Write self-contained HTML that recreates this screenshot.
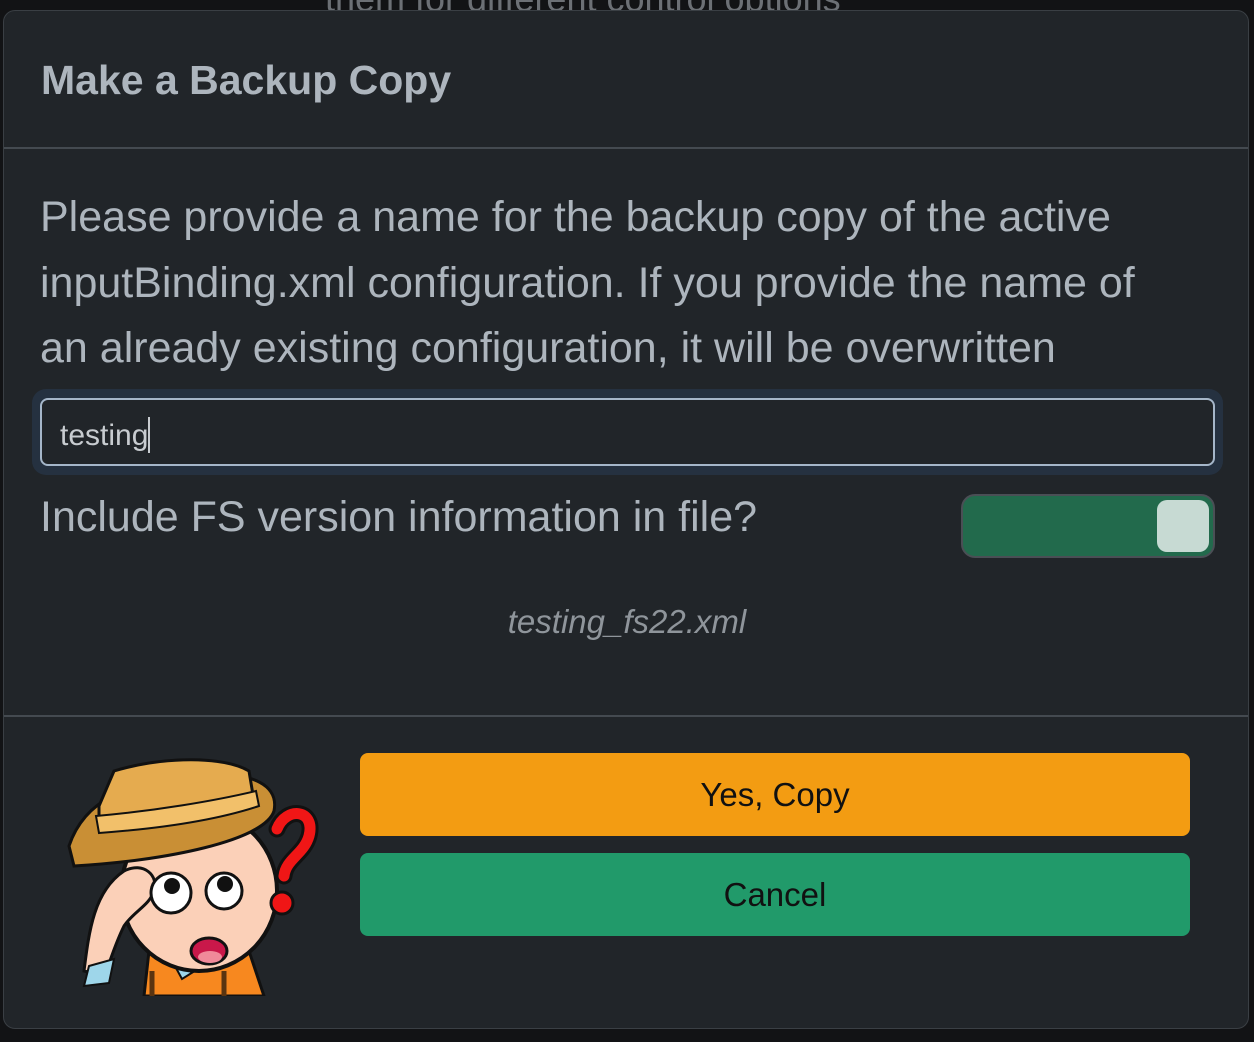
<!DOCTYPE html>
<html><head><meta charset="utf-8"><style>
html,body{margin:0;padding:0;width:1254px;height:1042px;background:#121315;overflow:hidden;font-family:"Liberation Sans",sans-serif;}
.top{position:absolute;left:325px;top:-22px;font-size:36px;color:#6c7075;white-space:nowrap}
.modal{position:absolute;left:3px;top:10px;width:1246px;height:1019px;background:#212529;border:1px solid #3a3f44;border-radius:12px;box-sizing:border-box;overflow:hidden}
.title{position:absolute;left:37px;top:46px;font-size:41px;font-weight:bold;color:#adb5bd;white-space:nowrap}
.hr{position:absolute;left:0;right:0;height:2px;background:#444a50}
.body{position:absolute;left:36px;top:174px;font-size:43px;line-height:65.5px;color:#adb5bd;white-space:nowrap}
.inwrap{position:absolute;left:28px;top:378px;width:1191px;height:86px;background:#253140;border-radius:14px}
.input{position:absolute;left:36px;top:387px;width:1175px;height:68px;border:2px solid #a5b6c9;border-radius:8px;box-sizing:border-box;background:#212529;font-size:30px;color:#c8ccd0;padding:17px 0 0 18px}
.caret{display:inline-block;width:2px;height:36px;background:#c8ccd0;vertical-align:-8px}
.lbl{position:absolute;left:36px;top:482px;font-size:43px;color:#adb5bd;white-space:nowrap}
.tog{position:absolute;left:957px;top:483px;width:254px;height:64px;border:2px solid #4a4f55;border-radius:14px;background:#226a4c;box-sizing:border-box}
.knob{position:absolute;right:4px;top:4px;width:52px;height:52px;border-radius:10px;background:#c7dad3}
.fn{position:absolute;left:0;width:1246px;top:592px;text-align:center;font-size:33px;font-style:italic;color:#8f959b}
.btn{position:absolute;left:356px;width:830px;height:83px;border-radius:8px;text-align:center;line-height:83px;font-size:33px;color:#111}
</style></head><body>
<div class="top">them for different control options</div>
<div class="modal">
<div class="title">Make a Backup Copy</div>
<div class="hr" style="top:136px"></div>
<div class="body">Please provide a name for the backup copy of the active<br>inputBinding.xml configuration. If you provide the name of<br>an already existing configuration, it will be overwritten</div>
<div class="inwrap"></div>
<div class="input">testing<span class="caret"></span></div>
<div class="lbl">Include FS version information in file?</div>
<div class="tog"><div class="knob"></div></div>
<div class="fn">testing_fs22.xml</div>
<div class="hr" style="top:704px"></div>
<svg style="position:absolute;left:60px;top:740px" width="270" height="245" viewBox="0 0 270 245">
<path d="M85 200 L80 245 L200 245 L185 200 Z" fill="#f7881f" stroke="#111" stroke-width="3"/>
<path d="M100 195 L118 228 L150 208 L140 190 Z" fill="#9ed6ea" stroke="#111" stroke-width="2"/>
<line x1="88" y1="220" x2="88" y2="245" stroke="#5a3410" stroke-width="5"/>
<line x1="160" y1="220" x2="160" y2="245" stroke="#5a3410" stroke-width="5"/>
<ellipse cx="135" cy="140" rx="78" ry="80" fill="#fbd0b8" stroke="#111" stroke-width="4"/>
<path d="M20 220 C25 180 30 140 60 120 C80 110 95 125 90 140 C85 155 70 160 60 175 C50 195 45 215 40 225 Z" fill="#fbd0b8" stroke="#111" stroke-width="3"/>
<path d="M25 215 L50 208 L45 232 L20 235 Z" fill="#9ed6ea" stroke="#111" stroke-width="2"/>
<circle cx="107" cy="142" r="20" fill="#fff" stroke="#111" stroke-width="3"/><circle cx="108" cy="135" r="8" fill="#111"/>
<circle cx="160" cy="140" r="18" fill="#fff" stroke="#111" stroke-width="3"/><circle cx="161" cy="133" r="8" fill="#111"/>
<ellipse cx="145" cy="200" rx="18" ry="13" fill="#c9184a" stroke="#111" stroke-width="3"/>
<ellipse cx="146" cy="206" rx="12" ry="6" fill="#f08a9a"/>
<path d="M5 95 C20 50 60 30 140 25 C190 20 215 35 210 60 C200 90 100 110 10 115 Z" fill="#c98f35" stroke="#111" stroke-width="3"/>
<path d="M35 55 L50 20 C100 5 160 5 185 20 L190 50 C140 60 80 65 35 70 Z" fill="#e5ab4f" stroke="#111" stroke-width="3"/>
<path d="M32 65 C90 60 150 50 192 40 L195 55 C150 70 90 78 35 82 Z" fill="#f2c06a" stroke="#111" stroke-width="2"/>
<path d="M213 78 C222 55 252 58 245 85 C240 103 222 108 220 125" fill="none" stroke="#111" stroke-width="17" stroke-linecap="round"/>
<path d="M213 78 C222 55 252 58 245 85 C240 103 222 108 220 125" fill="none" stroke="#f01616" stroke-width="11" stroke-linecap="round"/>
<circle cx="218" cy="152" r="11" fill="#f01616" stroke="#111" stroke-width="3"/>
</svg>
<div class="btn" style="top:742px;background:#f39c12">Yes, Copy</div>
<div class="btn" style="top:842px;background:#219a6a">Cancel</div>
</div>
</body></html>
